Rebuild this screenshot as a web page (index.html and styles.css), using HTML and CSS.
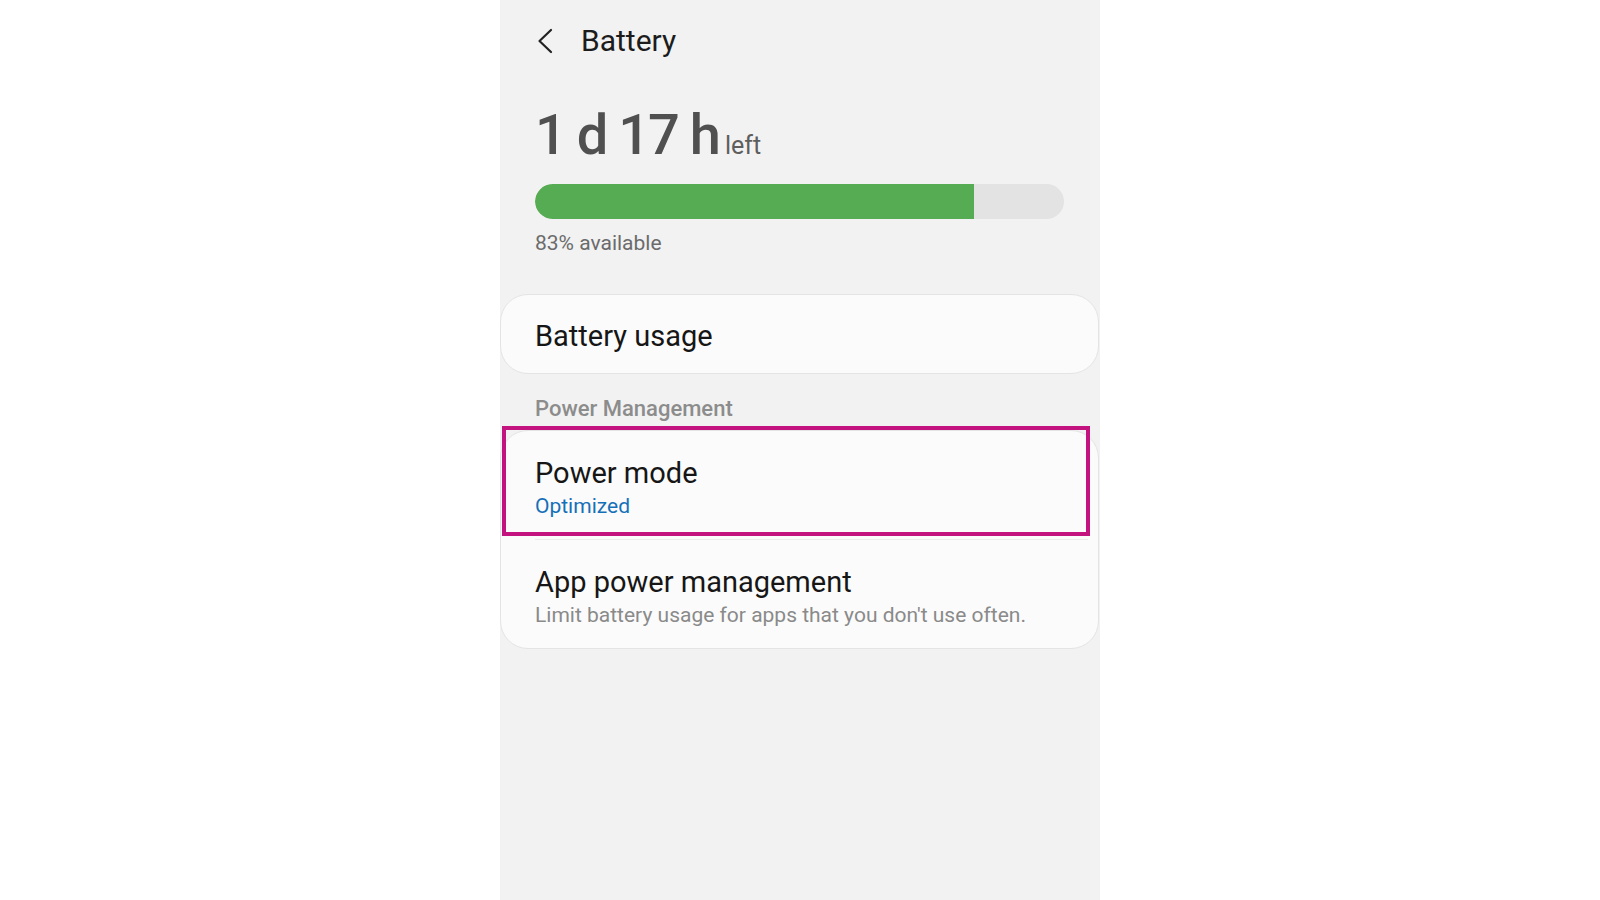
FILE: index.html
```html
<!DOCTYPE html>
<html lang="en">
<head>
<meta charset="utf-8">
<title>Battery</title>
<link rel="stylesheet" href="styles.css">
</head>
<body>
<div class="phone">
  <header class="topbar">
    <svg class="back" width="18" height="26" viewBox="0 0 18 26" aria-hidden="true">
      <polyline points="15,2 3.5,13 15,24" fill="none" stroke="#222" stroke-width="2.2" stroke-linecap="round" stroke-linejoin="round"/>
    </svg>
    <h1 class="title">Battery</h1>
  </header>

  <section class="hero">
    <div class="remaining"><span class="big">1 d 17 h</span><span class="left">left</span></div>
    <div class="bar"><div class="fill" style="width:83%"></div></div>
    <div class="avail">83% available</div>
  </section>

  <div class="card single">
    <div class="item-title">Battery usage</div>
  </div>

  <div class="section-label">Power Management</div>

  <div class="card">
    <div class="item item-first">
      <div class="item-title">Power mode</div>
      <div class="item-sub blue">Optimized</div>
      <div class="highlight"></div>
    </div>
    <div class="divider"></div>
    <div class="item item-second">
      <div class="item-title">App power management</div>
      <div class="item-sub gray">Limit battery usage for apps that you don't use often.</div>
    </div>
  </div>
</div>
</body>
</html>
```

FILE: styles.css
```css
* { box-sizing: border-box; }
html, body { margin: 0; padding: 0; }
body {
  background: #ffffff;
  font-family: Roboto, "Noto Sans", "Liberation Sans", sans-serif;
}
.phone {
  width: 600px;
  height: 900px;
  margin: 0 auto;
  background: #f2f2f2;
  overflow: hidden;
}
.topbar {
  height: 82px;
  display: flex;
  align-items: center;
  padding-left: 36px;
}
.back { display: block; margin-right: 27px; }
.title {
  margin: 0;
  font-size: 30px;
  font-weight: 400;
  color: #1c1c1c;
  line-height: 34px;
}
.hero {
  padding: 19px 36px 0 35px;
}
.remaining {
  line-height: 68px;
  height: 68px;
  white-space: nowrap;
}
.big {
  font-size: 56px;
  font-weight: 500;
  color: #505050;
  letter-spacing: -2px;
}
.left {
  font-size: 25px;
  color: #5e5e5e;
  margin-left: 6px;
}
.bar {
  margin-top: 15px;
  height: 35px;
  background: #e3e3e3;
  border-radius: 18px;
  overflow: hidden;
}
.fill {
  height: 100%;
  background: #56ac52;
  border-radius: 18px 0 0 18px;
}
.avail {
  margin-top: 12px;
  font-size: 21px;
  line-height: 24px;
  color: #6b6b6b;
}
.card {
  width: 599px;
  background: #fbfbfb;
  border: 1px solid #e4e4e4;
  border-radius: 28px;
}
.single {
  margin-top: 39px;
  height: 80px;
  padding: 24px 35px 0 34px;
}
.item-title {
  font-size: 29px;
  line-height: 34px;
  color: #161616;
}
.section-label {
  margin-top: 22px;
  padding-left: 35px;
  font-size: 22px;
  line-height: 26px;
  font-weight: 500;
  color: #8c8c8c;
}
.card + .section-label + .card { margin-top: 8px; }
.item {
  position: relative;
  padding-left: 34px;
}
.item-first {
  height: 108px;
  padding-top: 25px;
}
.item-second {
  height: 108px;
  padding-top: 25px;
}
.item-sub {
  font-size: 21px;
  line-height: 26px;
}
.item-first .item-sub { margin-top: 3px; }
.item-second .item-sub { margin-top: 3px; }
.blue { color: #1670b8; }
.gray { color: #8a8a8a; }
.divider {
  height: 1px;
  background: #ebebeb;
  margin: 0 10px 0 34px;
}
.highlight {
  position: absolute;
  left: 1px;
  top: -5px;
  right: 8px;
  bottom: 3px;
  border: 4px solid #c3137f;
  pointer-events: none;
}
```
